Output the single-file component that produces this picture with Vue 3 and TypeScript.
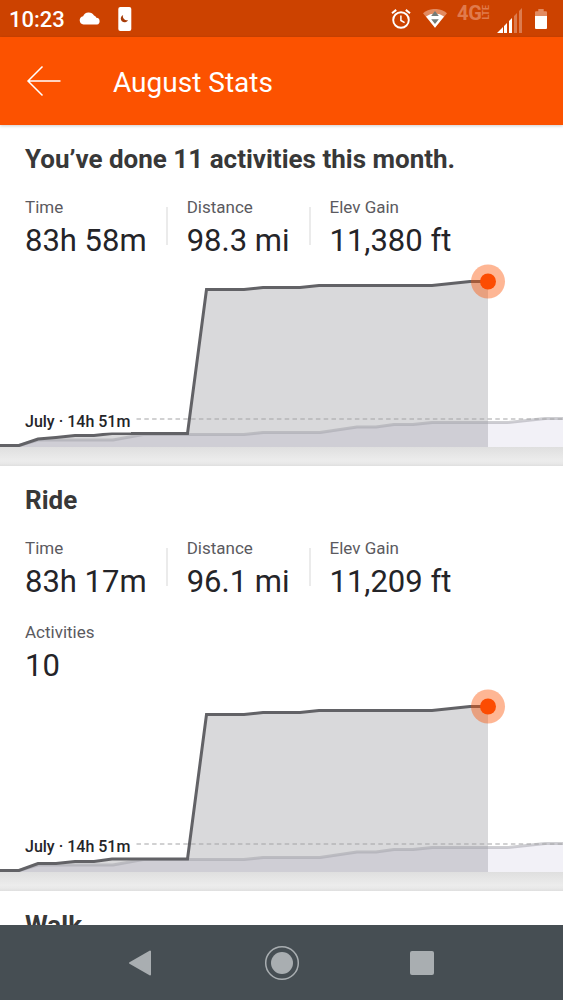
<script setup lang="ts">
interface Stat {
  label: string
  value: string
}

interface Section {
  title: string
  rows: Stat[][]
  current: string
  opaqueLabel: boolean
}

const sections: Section[] = [
  {
    title: 'You’ve done 11 activities this month.',
    rows: [
      [
        { label: 'Time', value: '83h 58m' },
        { label: 'Distance', value: '98.3 mi' },
        { label: 'Elev Gain', value: '11,380 ft' },
      ],
    ],
    current:
      '0,186.5 19,186.5 38,180 56,178.5 75,176.5 94,176.5 112,174.5 187.5,174.5 206.5,30.5 244,30.5 263,28.5 300,28.5 319,26.5 432,26.5 470,22.5 488,22.5',
    opaqueLabel: true,
  },
  {
    title: 'Ride',
    rows: [
      [
        { label: 'Time', value: '83h 17m' },
        { label: 'Distance', value: '96.1 mi' },
        { label: 'Elev Gain', value: '11,209 ft' },
      ],
      [{ label: 'Activities', value: '10' }],
    ],
    current:
      '0,186.5 19,186.5 38,179.5 56,179.5 75,177.5 94,177.5 112,175 187.5,175 206.5,30.5 244,30.5 263,28.5 300,28.5 319,26.5 432,26.5 470,22.5 488,22.5',
    opaqueLabel: false,
  },
]

const previous =
  '0,186.5 19,186.5 38,181 113,181 143,175.5 244,175.5 263,173.5 320,173.5 357,168 376,168 394,165.5 413,165.5 432,163.5 507,163.5 545,159.5 563,159.5'
</script>

<template>
  <div class="screen">
    <div class="status">
      <span class="clock">10:23</span>
      <svg class="cloud" width="22" height="13" viewBox="0 0 22 13" aria-hidden="true">
        <path d="M4.500 12.500a4.200 4.200 0 0 1-.4-8.300A6 6 0 0 1 15 3.600a4.400 4.400 0 0 1 2.400 2.200 3.400 3.400 0 0 1 .6 6.700z" fill="#fff" />
      </svg>
      <svg class="phone" width="14" height="24" viewBox="0 0 14 24" aria-hidden="true">
        <rect x="0.300" width="13" height="24" rx="2" fill="#fff" />
        <path d="M5.200 8a3.800 3.800 0 1 0 4.900 5A3.800 3.800 0 0 1 5.200 8z" fill="#a63b08" />
      </svg>
      <span class="spacer"></span>
      <svg class="alarm" width="20" height="20" viewBox="0 0 20 20" fill="none" stroke="#fff" aria-hidden="true">
        <circle cx="10" cy="11" r="7.800" stroke-width="1.900" />
        <path d="M9.900 6.500v5l3.700 2.200" stroke-width="1.500" />
        <path d="M1 4.300 5.200.9M14.800.9 19 4.300" stroke-width="2" />
      </svg>
      <svg class="wifi" width="24" height="19" viewBox="0 0 24 19" aria-hidden="true">
        <path d="M0 4.200a19 19 0 0 1 24 0L12 18.700z" fill="#e28b61" />
        <path d="M3 7.600a15 15 0 0 1 18 0l-9 11.100z" fill="#fff" />
        <path d="m12 2 3.800 5H8.200zM12 15 8.200 10.300h7.600z" fill="#747b77" />
      </svg>
      <span class="network"><b>4G</b><small>LTE</small></span>
      <svg class="signal" width="26" height="26" viewBox="0 0 26 26" aria-hidden="true">
        <path d="M0 25l6-6v6zM7 18l3-3v10H7zM12 13l3-3v15h-3z" fill="#fff" />
        <path d="M17 8l3-3v20h-3zM22 3l3-3v25h-3z" fill="#dc7b4e" />
      </svg>
      <svg class="battery" width="12" height="20" viewBox="0 0 12 20" aria-hidden="true">
        <path d="M0 7V3.200q0-1 1-1h2.300V0h5.400v2.200H11q1 0 1 1V7z" fill="#e28b61" />
        <path d="M0 7h12v12q0 1-1 1H1q-1 0-1-1z" fill="#fff" />
      </svg>
    </div>

    <header class="appbar">
      <button class="back" type="button" aria-label="Back">
        <svg width="36" height="32" viewBox="0 0 36 32" fill="none" stroke="#fff" stroke-width="1.500" aria-hidden="true">
          <path d="M34.500 16H2M16.500 1.500 2 16l14.500 14.500" />
        </svg>
      </button>
      <h1>August Stats</h1>
    </header>

    <main class="content">
      <section v-for="section in sections" :key="section.title" class="card">
        <h2>{{ section.title }}</h2>
        <div class="rows">
          <dl v-for="(row, i) in section.rows" :key="i" class="row">
            <div v-for="stat in row" :key="stat.label" class="stat">
              <dt>{{ stat.label }}</dt>
              <dd>{{ stat.value }}</dd>
            </div>
          </dl>
        </div>
        <svg class="chart" viewBox="0 0 563 188" role="img" aria-label="Time this month compared with July">
          <polygon :points="`${previous} 563,188 0,188`" fill="#f2f1f7" />
          <polygon :points="`${section.current} 488,188 0,188`" fill="#68686e" fill-opacity="0.25" />
          <polyline :points="previous" fill="none" stroke="#a09fa8" stroke-opacity="0.5" stroke-width="3" />
          <line x1="136.500" y1="160" x2="563" y2="160" stroke="#a4a4a6" stroke-width="1.200" stroke-dasharray="4.500 3.300" />
          <polyline :points="section.current" fill="none" stroke="#626266" stroke-width="3" />
          <rect v-if="section.opaqueLabel" x="25" y="150" width="106" height="23.500" fill="#fff" />
          <text x="25" y="168" class="chart-label">July · 14h 51m</text>
          <circle cx="488" cy="22.500" r="17" fill="#fc5200" fill-opacity="0.42" />
          <circle cx="488" cy="22.500" r="8" fill="#fc4c02" />
        </svg>
      </section>
      <section class="card">
        <h2>Walk</h2>
      </section>
    </main>

    <nav class="nav">
      <button type="button" aria-label="Back">
        <svg width="24" height="26" viewBox="0 0 24 26" aria-hidden="true">
          <path d="M21 1.500v23L1 13z" fill="#a9aeb1" stroke="#a9aeb1" stroke-width="2" stroke-linejoin="round" />
        </svg>
      </button>
      <button type="button" aria-label="Home">
        <svg width="36" height="36" viewBox="0 0 36 36" aria-hidden="true">
          <circle cx="18" cy="18" r="16.300" fill="none" stroke="#a9aeb1" stroke-width="1.500" />
          <circle cx="18" cy="18" r="11" fill="#a9aeb1" />
        </svg>
      </button>
      <button type="button" aria-label="Recent apps">
        <svg width="24" height="24" viewBox="0 0 24 24" aria-hidden="true">
          <rect width="24" height="24" rx="2" fill="#a9aeb1" />
        </svg>
      </button>
    </nav>
  </div>
</template>

<style>
body {
  margin: 0;
}
</style>

<style scoped>
.screen {
  display: flex;
  flex-direction: column;
  height: 100vh;
  overflow: hidden;
  background: #fff;
  color: #242428;
  font-family: Roboto, "Liberation Sans", sans-serif;
}

.status {
  display: flex;
  flex: none;
  align-items: center;
  box-sizing: border-box;
  height: 37px;
  padding: 0 16px 0 9px;
  background: #cc4200;
  color: #fff;
}

.clock {
  padding-top: 2px;
  font-size: 22px;
  font-weight: 500;
  line-height: 26px;
}

.cloud {
  margin-left: 14px;
}

.phone {
  margin-left: 17px;
}

.spacer {
  flex: 1;
}

.wifi {
  margin-left: 12px;
}

.network {
  display: flex;
  align-items: center;
  margin: 0 6px 12px 10px;
  color: #e07a4c;
}

.network b {
  font-size: 20px;
  line-height: 16px;
}

.network small {
  font-size: 9px;
  font-weight: 700;
  line-height: 9px;
  writing-mode: vertical-rl;
  transform: rotate(180deg);
}

.signal {
  margin: 4px 12px 0 0;
}

.appbar {
  display: flex;
  position: relative;
  flex: none;
  align-items: center;
  height: 88px;
  background: #fc5200;
  box-shadow: 0 1px 3px rgba(0, 0, 0, 0.2);
  color: #fff;
}

button {
  display: flex;
  align-items: center;
  justify-content: center;
  margin: 0;
  padding: 0;
  border: 0;
  background: none;
}

.back {
  width: 88px;
  height: 88px;
}

h1 {
  margin: 0 0 0 25px;
  padding-top: 3px;
  font-size: 28px;
  font-weight: 400;
  line-height: 32px;
}

.content {
  flex: 1;
  min-height: 0;
  overflow: hidden;
}

.card {
  padding-top: 19px;
  background: #fff;
}

.card + .card::before {
  display: block;
  height: 19px;
  margin: -19px 0 19px;
  background: linear-gradient(#dfdfdf, #ececec 70%, #e9e9e9 85%, #dfdfdf);
  content: "";
}

h2 {
  margin: 0 25px 23px;
  color: #383838;
  font-size: 26px;
  font-weight: 700;
  line-height: 30px;
}

.rows {
  display: flex;
  flex-direction: column;
  gap: 22px;
  padding: 0 25px;
}

.row {
  display: flex;
  margin: 0;
}

.stat {
  position: relative;
}

.stat + .stat {
  margin-left: 40px;
}

.stat + .stat::before {
  position: absolute;
  top: 10px;
  bottom: 14px;
  left: -21px;
  width: 2px;
  background: #ebebeb;
  content: "";
}

dt {
  margin-bottom: 6px;
  color: #5b5a60;
  font-size: 17px;
  line-height: 20px;
}

dd {
  margin: 0;
  font-size: 31px;
  line-height: 36px;
}

.chart {
  display: block;
  width: 100%;
}

.chart-label {
  fill: #242428;
  font-size: 16px;
  font-weight: 500;
}

.nav {
  display: grid;
  flex: none;
  grid-template-columns: repeat(3, 25%);
  justify-content: center;
  height: 75px;
  background: #464e53;
}
</style>
